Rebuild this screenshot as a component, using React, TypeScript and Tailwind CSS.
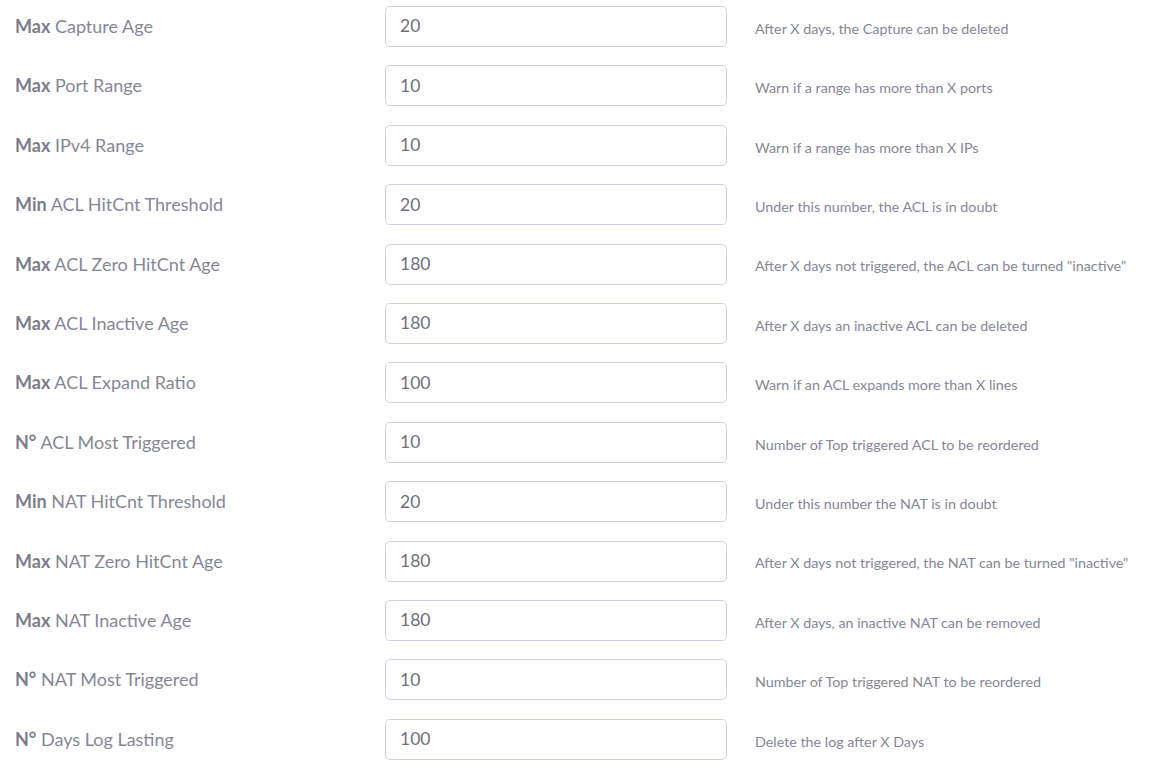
import React from "react";

const rows: [string, string, string, string][] = [
  ["Max", "Capture Age", "20", "After X days, the Capture can be deleted"],
  ["Max", "Port Range", "10", "Warn if a range has more than X ports"],
  ["Max", "IPv4 Range", "10", "Warn if a range has more than X IPs"],
  ["Min", "ACL HitCnt Threshold", "20", "Under this number, the ACL is in doubt"],
  ["Max", "ACL Zero HitCnt Age", "180", 'After X days not triggered, the ACL can be turned "inactive"'],
  ["Max", "ACL Inactive Age", "180", "After X days an inactive ACL can be deleted"],
  ["Max", "ACL Expand Ratio", "100", "Warn if an ACL expands more than X lines"],
  ["N°", "ACL Most Triggered", "10", "Number of Top triggered ACL to be reordered"],
  ["Min", "NAT HitCnt Threshold", "20", "Under this number the NAT is in doubt"],
  ["Max", "NAT Zero HitCnt Age", "180", 'After X days not triggered, the NAT can be turned "inactive"'],
  ["Max", "NAT Inactive Age", "180", "After X days, an inactive NAT can be removed"],
  ["N°", "NAT Most Triggered", "10", "Number of Top triggered NAT to be reordered"],
  ["N°", "Days Log Lasting", "100", "Delete the log after X Days"],
];

export default function App() {
  return (
    <div
      className="w-[1158px] h-[769px] bg-white overflow-hidden pt-[6px]"
      style={{ fontFamily: "Lato, 'Open Sans', sans-serif" }}
    >
      <div className="flex flex-col gap-[18.42px]">
        {rows.map(([b, l, v, d], i) => (
          <div key={i} className="grid grid-cols-[370px_372px_1fr] items-center h-[41px]">
            <div className="pl-[15px] text-[18px] text-[#858796]">
              <span className="font-bold text-[#7b7d8a]">{b}</span> {l}
            </div>
            <div className="px-[15px]">
              <div className="h-[41px] border border-[#d1d3e2] rounded-[5px] flex items-center px-[14px] text-[17.5px] text-[#6e707e]">
                {v}
              </div>
            </div>
            <div className="pl-[13px] pt-[4px] text-[14.3px] text-[#858796] whitespace-nowrap">{d}</div>
          </div>
        ))}
      </div>
    </div>
  );
}
